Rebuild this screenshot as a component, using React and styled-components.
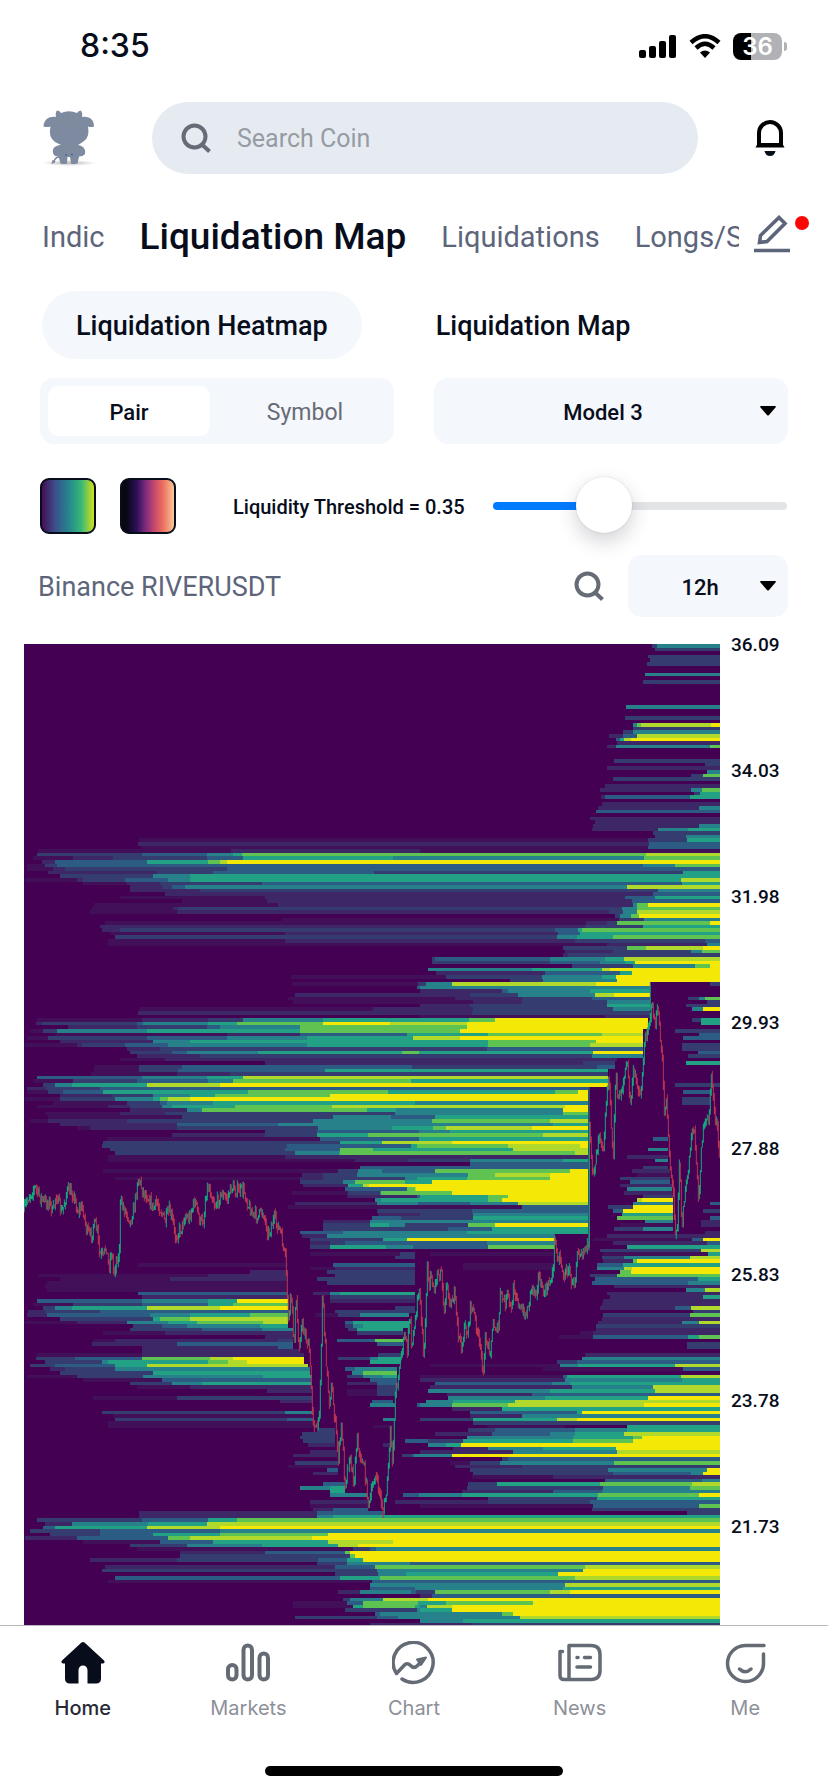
import React, { useState } from "react";
import styled, { createGlobalStyle } from "styled-components";

const Global = createGlobalStyle`
  *, *::before, *::after { box-sizing: border-box; }
  body { margin: 0; background: #fff; color: #070d1b; font-family: Roboto, "Liberation Sans", sans-serif; }
  button, input, select { font: inherit; color: inherit; border: 0; padding: 0; margin: 0; background: none; }
  button { cursor: pointer; }
`;

/* ---------- heatmap data: "row|start:level start:level ..." ---------- */

const LEVELS = ["#440154", "#421059", "#3d2767", "#353d70", "#2c5b83", "#26818a", "#22a184", "#5fc351", "#b0d92c", "#f4e807"];

const NORTH_WEST = `
622|358:1;633|355:2;644|365:1;655|55:1 632:2;666|50:3 150:3 365:4 560:5 640:6 665:7;677|40:1 160:2 280:3 560:4 670:6;
688|65:2 105:4 380:6 565:7 600:8 620:9;699|20:1 75:3 110:4;710|20:1 100:2 135:3 620:4;720|85:2 410:3 580:4;
731|120:3 400:5 510:6;742|15:1 170:2 190:3 315:4 445:5 510:6;753|190:1 320:2 420:3 725:4;764|330:2 425:3 455:4 495:5;
774|330:2 540:3;785|435:2;796|300:1 735:2;807|485:1 740:2;818|222:1 775:2;828|215:1 460:2 475:3;839|210:1 470:2;
860|785:1;871|255:1;882|240:2;893|245:2 300:3;904|270:1 795:2;915|285:3;926|265:1 795:2;936|265:1;1033|813:1;
1054|815:1 1195:3;1065|1190:4;1087|825:2;1098|805:1;1109|820:1;1130|358:1;1141|355:2;1164|50:1 365:2 565:3 670:5 910:6;
1175|48:2 65:3 350:4 370:5 565:6 650:7 910:9;1186|145:2 350:3 560:4 600:5 840:7;1196|30:1 70:3 110:5 380:6 840:7;
1207|105:1 620:2 840:4 1160:6;1218|20:1 85:3 380:4 620:5 860:6 1180:8;1229|120:2 400:5 510:6;
1239|15:1 170:2 185:3 315:4 445:5 860:6;1250|320:2 420:3;1261|330:3 455:4 500:5 715:6 1145:7;1272|350:2 540:3;
1283|300:1 435:2;1293|735:2;1304|222:1 357:3 485:4;1315|222:1 358:3 475:4 915:6;1326|212:1 470:2 630:3;
1337|50:4 365:5 560:6 670:8;1347|40:1 160:3 350:4 565:5 640:7;1358|70:3 105:5 155:6 380:8 600:9;1369|20:2 78:3 240:4;
1380|20:1 85:3 130:4 250:6 685:7;1391|120:2 275:3 400:5 510:6 585:7 930:9;1401|15:1 120:3 285:5 400:6 420:7 445:8 510:9;
1412|100:1 320:3 420:4 440:5 580:6;1423|50:1 265:2 330:3 425:5 455:6 645:7 935:8;1434|330:2 500:5 545:7;
1445|75:1 300:2 435:3 1125:5;1455|85:1 485:3 940:5;1466|30:1 85:2 320:3 880:5;1477|120:2 470:4 775:5;1488|170:1 210:2 470:3 895:5`;

const NORTH_EAST = `
42|695:3 712:5;53|705:3;75|685:3;86|690:3;97|682:3;129|675:5;150|670:3;225|618:5;257|615:3;279|638:5 650:7 664:8 872:9;
290|640:3;301|608:3 640:5;312|567:2 610:4 650:8;323|587:4 600:6 612:8 633:9;333|592:2;344|562:2 588:5 870:7;387|582:3;
398|855:3;408|560:2;420|860:5;430|813:3 848:7;440|580:3;462|555:2;473|540:2 812:5 845:7;484|822:3 840:6;
494|543:2 555:4 810:6;516|546:2;527|535:2 838:5;538|528:4;559|510:2;570|524:2;581|520:2 836:5;592|516:2 714:5 804:6;
602|700:3;613|705:3 798:5;624|0:1 685:3 800:6;634|0:2 688:4;645|0:1 683:4;656|0:1;667|0:7 678:8;678|0:5 672:7;688|0:9;
699|0:4 670:5 765:7;710|0:4;721|0:3 788:6;732|0:6;743|0:6 783:8;753|0:4 786:6;764|0:5 620:8;775|0:3 713:5;786|0:2 700:4;
797|0:2 615:4 705:6;807|0:2 637:4;818|0:2 638:5 650:7 685:9;829|0:3 606:5 650:7;840|0:2 567:3 610:5 650:8;
850|585:3 600:5 632:7 656:9;861|598:3 672:5;872|0:1 498:2 562:3 590:7 870:9;883|0:2 495:3 670:6;893|0:3 405:4 475:6 487:7;
904|0:2 415:4 480:6;915|0:3 410:5 470:6 580:7;926|0:2 465:3 855:4;937|0:1 560:2 860:5;948|430:3 620:7 678:8 850:9;
958|435:2 580:3 813:5 845:7;969|430:2 445:3;980|35:3 45:4 390:5 555:6 612:8;991|35:3 390:4 540:5 615:6 645:9;
1001|455:3 640:5 825:7 870:9;1012|25:5 335:6 545:8 570:9;1023|48:2 375:4 600:6 635:9;1034|78:3 365:5 545:6 587:9;
1045|270:3 370:5 590:9;1056|0:3 18:5 97:8 527:9 690:0 870:3;1067|0:5 690:0;1078|0:2 245:4 265:5 510:6 690:0;
1088|150:3 295:5 525:8 582:9 690:0;1099|105:2 305:3 515:4 690:0 805:3 836:5 855:7;1110|160:2 305:3 560:5 690:0 862:3;
1121|0:2 150:3 560:6 690:0 798:3;1132|0:2 160:3 580:5 690:0 815:5 850:9;1142|155:3 690:0;1153|0:1 555:2 690:0;
1164|0:6 147:7 225:9 683:0 815:3 843:6;1175|0:8 140:9 683:0 843:6;1186|0:7 140:9 683:0;1196|0:7 120:9 668:0 765:3;
1207|0:6 205:7 545:8 668:0 838:4;1218|0:8 120:9 668:0 788:4;1229|0:6 205:7 527:9 668:0;1239|0:6 205:7 510:8 668:0 785:3;
1250|0:3 200:4 668:0 785:3;1261|0:6 520:9 668:0 835:4;1272|0:3 515:5 668:0 805:3;1283|0:2 590:0;1294|0:2 490:3 586:0 798:6;
1304|0:3 530:4 586:0;1315|0:6 565:0;1326|0:3 565:0;1337|0:8 565:0;1347|0:6 565:0;1358|0:9 565:0 765:3;1369|0:4 505:0;
1380|0:6 405:7 475:9 505:0 788:4 870:0;1391|0:9 505:0;1401|0:9 505:0 785:3 870:0;1412|0:5 505:0 785:3 870:0;
1423|0:8 435:9 505:0;1434|0:5 430:9 505:0;1445|0:5 430:7 505:0;1455|0:4 45:6 505:0;1466|0:5 35:7 390:8 505:0;
1477|0:5 400:6 505:0;1488|0:6 40:7 78:8 335:9 505:0`;

const SOUTH_WEST = `
-2|735:3 890:4;9|455:2 735:3 890:6;20|260:1 900:4;30|250:3 900:3;41|245:3 800:4;52|270:3 795:4 960:7;63|285:3 825:5;73|265:1 795:2;
84|265:1;106|1020:4;117|250:1 955:3 1015:5;127|845:2 910:3 1010:5;138|285:1 840:2 910:3;149|840:3 970:5 1005:7;
160|850:2 985:6 1030:8;171|975:4 1160:7;181|815:1 985:3;192|980:2 1190:4;203|1065:5;214|825:2 1070:5;225|805:1;
235|1070:3;246|1075:2;257|1055:4;268|910:2 1050:5;278|910:3 1050:6;289|910:3;300|840:4;311|845:2 920:5;
322|870:3 1090:6 1160:9;333|870:2 930:3;343|870:3 930:6;365|870:1 1140:3;376|1125:3;397|355:1 805:0 940:4;
408|870:1 945:2;419|690:2 805:0 920:3;430|55:1 565:2 805:0 945:3;440|120:1 450:2 805:0 890:3;451|80:1 805:0 920:3;
462|75:1 805:0;473|80:1 805:0;484|355:4 805:0 880:2 930:5 960:6;494|365:2 805:0 930:3;505|50:4 365:5 565:6 650:9 805:0 930:2;
516|40:1 160:3 365:4 565:6 640:7 805:0;527|70:3 105:5 155:6 380:8 600:9 805:0 1125:3;538|25:2 75:3 240:4 805:0 945:3;
548|20:2 80:4 390:5 510:6 690:7 805:0 885:1 955:3 1020:5 1168:0;559|120:3 400:6 420:7 510:8 805:0;570|15:1 170:2 320:5 445:6 530:7 730:8 805:0 975:4 1000:6 1168:0;
581|340:3 425:4 500:5 720:6 805:0 975:3 1000:5 1030:6 1168:0;592|330:3 545:4 725:5 820:0 985:3 1010:6 1150:0;602|250:1 435:2 820:0 1010:3 1150:0;
613|735:2 820:0;624|220:1 285:2 775:3 820:0 950:4 1065:7 1150:0;635|215:2 470:4 820:0 1070:4 1150:0;645|365:2 775:4 820:0;
656|365:2 840:0;667|50:1 365:2 853:0 1075:3 1145:0;678|48:3 165:4 365:7 570:8 640:9 853:0 955:3 1050:5 1075:6 1142:0;
689|75:3 245:5 265:6 565:7 625:8 680:9 853:0 1050:6 1142:0;699|30:3 105:4 285:6 380:8 865:0;710|90:2 135:3 285:5 870:0 975:4 1005:5 1130:0;
721|120:3 400:6 870:0 995:5 1030:7 1130:0;732|20:1 170:3 370:5 730:6 875:0 980:3 1030:5 1090:6 1130:0;743|190:1 425:4 875:0 1050:4 1130:0;
753|330:3 455:5 545:6 875:0 980:2 1070:4 1130:0;764|350:1 510:2 875:0 1070:3 1130:0;775|740:2 875:0 980:1 1070:3 1130:0;786|980:1 1070:3 1130:0;797|220:1 470:3 875:0;
807|780:2 875:0 1055:4 1120:0;818|1050:5 1125:0 1190:4;840|245:3 795:5 875:0;850|280:1 875:0;861|285:3 800:4 880:0 1090:5 1125:0;
872|265:1 880:0;883|265:1 880:0 1060:1 1120:0;894|890:3 945:0;904|845:3 945:0;915|840:3 945:0;926|850:3 945:0 1155:4;
937|865:2 945:0 1090:2 1120:0;958|870:2 950:0;969|820:2 950:0 1145:3;991|825:3 955:0;1001|805:1 955:0;1012|920:4 955:0;
1023|880:2 955:0;1055|910:4 975:0;1066|840:5 930:6 975:0;1077|930:6 975:0;1088|930:5 1045:0 1150:4;1109|870:2 1045:0 1125:2;
1120|870:1 1045:0;1131|880:2 940:4 1045:0;1142|358:2 890:4 1090:0;1152|358:2 890:5 940:6;1164|50:3 365:4 565:6 650:7;1174|75:2 155:5 385:6 560:8;
1185|70:4 105:6 380:8 600:9;1196|30:3 240:4 600:5;1207|90:3 240:4 400:6 600:7 925:9;1218|15:2 170:4 445:7 510:8 875:9;
1229|190:1 420:4 580:6 925:8 1120:9;1239|330:3 500:5 725:6 955:8 1015:9;1250|350:1 1000:3;1261|480:2 735:4 975:7 990:9;
1272|480:3 990:7 1005:9;1283|210:2 470:3 895:4 980:6 1030:9;1293|890:3 980:5;1304|255:2 945:4 1065:7;1315|245:3 1070:5;
1326|945:3 1075:5;1337|285:4 960:6 1080:7;1347|265:1 1055:4;1358|1050:5;1369|1050:4;1380|955:2 1020:5;1401|970:3 990:5 1090:8;
1412|820:1 980:4 1030:7;1423|820:1 1000:6 1030:7;1434|975:3 1190:5;1444|1065:4;1455|825:3 1070:4;1477|1050:2`;

const SOUTH_EAST = `
-2|0:5 90:6 505:0;9|0:7 370:8 505:0;20|0:6 505:0 700:4 745:0;30|0:8 95:9 505:0;41|0:7 265:8 480:9 505:0;52|0:6 280:8 505:0 685:5 745:0;
63|0:7 465:8 505:0;73|0:2 505:0 620:2 745:0;84|0:3 150:5 430:6 505:0 705:5 745:0;95|0:0 150:4 505:0;106|0:4 505:0 670:3 745:0;117|0:4 45:7 450:9 505:0 635:2 750:0;
127|0:5 145:7 225:8 390:9 505:0 650:1 750:0;138|0:6 140:7 390:9 505:0 600:3 750:0;149|0:6 35:9 505:0 630:4 750:0;160|0:9 505:0 600:2 755:0;171|0:9 505:0 620:5 755:0;
182|0:7 95:9 505:0 612:2 755:0;192|0:6 205:7 265:9 505:0 670:3 760:0;203|0:6 205:7 245:9 505:0 650:8 665:9 760:0;214|0:4 150:5 295:8 505:0 640:5 760:0 870:4;
225|0:1 305:4 505:0 565:3 640:9 760:0;235|0:3 155:4 505:0 580:4 610:9 760:0 850:3;246|0:3 160:5 505:0 605:6 760:0;257|0:3 160:6 505:0 590:7 760:0 870:4;
268|0:5 505:0 675:5 760:0 842:2;278|0:3 145:7 225:9 505:0 600:1 760:0 842:2;289|0:3 85:4 215:6 505:0 582:3 670:5 760:0;300|0:5 140:6 505:0 855:2;
311|0:5 405:0 560:2;322|0:9 405:0 520:1 815:4 850:9;333|0:4 200:5 405:0 580:2 860:4;343|0:4 205:7 405:0 620:6;354|540:3 843:8;
365|30:1 400:0 550:1 865:6;376|545:3 612:5 810:8;387|550:2 640:7 650:9;397|130:1 400:0 530:4 610:6;408|130:1 400:0 530:5 612:8 635:9;419|600:7 632:9;
430|510:3 590:7;440|525:4 835:6;451|515:4 805:5;462|582:2;473|798:5 855:8;484|560:2;494|570:2 850:6;505|550:2;516|545:2;
527|540:2 765:4 812:8;538|820:3;548|550:3 810:7;559|545:2;570|535:2 785:5 836:8;581|528:3;592|528:2;602|480:1 520:2;
613|418:1 520:4 805:6 838:7;635|800:3;645|800:3;667|495:2;678|485:5;689|410:3 470:4;699|30:1 420:5 475:6 765:8;710|370:1 788:4;
732|0:1 430:4 440:6 783:8;743|0:2 435:5 785:6;753|45:4 395:5 450:6;764|30:2 455:5 700:8;775|25:5 390:6 705:8;786|80:2 335:4;
797|85:5 375:6 685:9;807|18:5 100:6 285:8;818|0:5 97:7 265:8 672:9;829|97:2 245:6;840|150:4 470:6 485:9;850|150:2 305:5;
861|0:3 160:6 410:8 470:9;872|160:3;883|200:1 435:0 620:6;894|145:3 225:4 465:5 620:6;904|45:2 215:4 390:5 465:6 612:8;915|140:5 460:6 640:7 665:9;
926|25:3 130:6 460:7 640:9;937|25:5 78:6 122:9;947|100:2 205:5 370:6 587:9;958|0:2 280:5 590:8;969|0:5 97:9;980|245:3 265:4;
991|90:1 150:3 240:5 582:7;1001|105:2 305:3;1012|150:3 565:5 860:9;1023|160:3 580:4 812:5 850:9;1034|155:1 400:2;1045|555:4 845:5;
1055|145:3 230:6 540:7 815:8;1066|140:3 550:5 810:7;1077|125:2 400:4 545:5;1088|0:5 125:6 535:7 838:9;1099|205:3 530:6;
1109|205:3 510:4;1120|0:1 520:4 838:7;1131|515:3 805:3;1142|0:0 800:3;1152|0:6;1164|0:7;1174|0:8;1185|0:9;1196|0:5;1207|0:9;
1218|0:9;1229|0:9;1239|0:9;1250|0:5;1261|0:9;1272|0:9;1283|0:9;1293|0:4;1304|0:7 495:8;1315|0:5 490:9;1326|0:6 415:9;
1337|0:7 465:8;1347|0:4;1358|0:5 435:8;1369|0:5 430:6;1380|0:3 45:7 390:8 450:9;1391|0:2 35:4;1401|0:8 25:9;1412|0:6 78:7 340:9;
1423|0:5 20:8 95:9;1434|0:6 95:9;1444|0:5 245:7 280:9;1455|0:5 300:8;1466|0:5 130:6;1477|0:2 160:3`;

const ROW = 10.785;
const TOP = 42;
const MIDDLE = 1200;
const RIGHT = 2100;

function makeRandom(start) {
  let seed = start;
  return () => {
    seed = (seed * 16807) % 2147483647;
    return seed / 2147483647;
  };
}

function readBlock(rows, side, text, dx, dy) {
  text.replace(/\s*\n/g, "").split(";").forEach((line) => {
    const [row, cells] = line.split("|");
    const k = Math.round((Number(row) + dy - TOP) / ROW);
    rows[k] = rows[k] || { west: [], east: [] };
    rows[k][side] = cells.trim().split(" ").map((c) => {
      const [x, level] = c.split(":").map(Number);
      return [x + dx, level];
    });
  });
}

/* Joins the west and east half of each row; where the levels differ, the step is spread over a short stretch. */
function buildBands() {
  const rows = {};
  readBlock(rows, "west", NORTH_WEST, 0, 0);
  readBlock(rows, "east", NORTH_EAST, MIDDLE, 0);
  readBlock(rows, "west", SOUTH_WEST, 0, 1500);
  readBlock(rows, "east", SOUTH_EAST, MIDDLE, 1500);
  const rand = makeRandom(11);
  const paths = LEVELS.map(() => "");
  Object.keys(rows).forEach((key) => {
    const k = Number(key);
    const { west, east } = rows[k];
    const y1 = TOP + k * ROW;
    const y2 = (y1 + ROW).toFixed(1);
    const underPrice = y1 > 1840 && y1 < 2390;
    const stops = [...west];
    const lastWest = west.length ? west[west.length - 1] : [0, 0];
    if (east.length && east[0][0] === MIDDLE) {
      const diff = Math.abs(east[0][1] - lastWest[1]);
      const room = MIDDLE - Math.max(lastWest[0], 900);
      if (diff > 0 && lastWest[1] > 0 && room > 20) {
        const a = MIDDLE - room * rand() * 0.9;
        stops.push([Math.round(a), Math.round((east[0][1] + lastWest[1]) / 2)]);
        stops.push([Math.round(a + (MIDDLE - a) * rand()), east[0][1]]);
      }
    } else if (underPrice) {
      stops.push([MIDDLE - 14, 0]);
    }
    stops.push(...east);
    stops.forEach(([x, level], i) => {
      const right = i + 1 < stops.length ? stops[i + 1][0] : RIGHT;
      if (level) paths[level] += `M${x} ${y1.toFixed(1)}H${right}V${y2}H${x}Z`;
    });
  });
  return paths;
}

const PRICE = `12,1740 25,1700 45,1670 60,1700 75,1715 90,1715 98,1750 108,1690 125,1750 142,1680 160,1690 172,1740 188,1730 200,1800
212,1820 222,1780 232,1800 238,1870 250,1880 258,1840 266,1910 275,1860 281,1930 290,1880 297,1890 301,1720 310,1730 322,1750
332,1775 345,1715 354,1640 370,1685 385,1700 400,1735 410,1715 425,1745 435,1775 447,1740 458,1770 465,1820 485,1790 495,1755
505,1765 525,1710 540,1775 552,1765 558,1680 568,1670 585,1725 605,1690 620,1705 635,1670 650,1680 672,1680 685,1725 700,1755
715,1755 728,1740 745,1810 763,1765 780,1800 797,1890 806,2080 813,1980 822,2140 828,2000 836,2150 846,2080 858,2120 868,2160
878,2350 887,2400 897,2370 903,2180 908,1960 912,2080 922,2240 928,2310 935,2270 945,2370 955,2480 965,2380 975,2560 988,2480
1002,2550 1012,2410 1020,2490 1030,2490 1040,2570 1047,2630 1055,2580 1065,2530 1080,2590 1090,2645 1100,2580 1112,2400
1118,2500 1125,2300 1135,2230 1145,2160 1155,2110 1162,2160 1170,2040 1175,2150 1185,2080 1192,1990 1200,1990 1205,2080
1211,2185 1217,2050 1223,1870 1226,1980 1232,1930 1243,1980 1250,1930 1265,1920 1272,2040 1280,1965 1293,2020 1303,1990
1315,2110 1325,2150 1335,2090 1343,2110 1352,2020 1365,2060 1378,2140 1391,2220 1397,2120 1410,2160 1420,2080 1435,2100
1441,1990 1455,2020 1463,1990 1475,2050 1479,1970 1490,1990 1500,2040 1520,2050 1535,1965 1548,1985 1556,1930 1568,1990
1582,1975 1600,1920 1603,1815 1610,1870 1620,1880 1632,1940 1645,1910 1657,1965 1666,1940 1672,1850 1685,1865 1700,1840
1706,1860 1708,1500 1715,1600 1722,1620 1738,1500 1750,1550 1765,1330 1772,1450 1779,1590 1788,1310 1790,1400 1805,1380
1821,1295 1832,1430 1838,1330 1850,1350 1862,1400 1872,1260 1880,1200 1892,1150 1896,1125 1905,1180 1915,1140 1922,1250
1928,1310 1934,1470 1940,1380 1944,1500 1950,1600 1960,1690 1965,1800 1972,1780 1979,1560 1985,1800 1995,1680 2005,1620
2018,1480 2025,1510 2035,1720 2045,1530 2055,1480 2065,1470 2075,1330 2083,1440 2092,1500 2100,1610`;

function buildCandles() {
  const pts = PRICE.split(/\s+/).map((p) => p.split(",").map(Number));
  const rand = makeRandom(7);
  let up = "";
  let down = "";
  let last = pts[0][1];
  let s = 0;
  for (let x = 13; x < RIGHT; x += 3) {
    while (pts[s + 1][0] < x) s += 1;
    const [x0, y0] = pts[s];
    const [x1, y1] = pts[s + 1];
    const next = y0 + ((y1 - y0) * (x - x0)) / (x1 - x0) + (rand() - 0.5) * 34;
    const hi = Math.min(last, next) - rand() * 16;
    const lo = Math.max(last, next) + rand() * 16;
    const bar = `M${x} ${hi.toFixed(0)}V${lo.toFixed(0)}`;
    if (next < last) up += bar;
    else down += bar;
    last = next;
  }
  return { up, down };
}

const BANDS = buildBands();
const CANDLES = buildCandles();

/* ---------- layout ---------- */

const Page = styled.div`
  min-height: 100vh;
  display: flex;
  flex-direction: column;
  overflow: hidden;
`;

const StatusBar = styled.div`
  height: 92px;
  padding: 0 41px 0 80px;
  display: flex;
  align-items: center;
  justify-content: space-between;
  font-family: Inter, sans-serif;
`;

const Clock = styled.time`
  font-size: 32px;
  font-weight: 500;
  line-height: 40px;
`;

const StatusIcons = styled.div`
  display: flex;
  align-items: center;
  gap: 12px;
`;

const Battery = styled.span`
  display: flex;
  align-items: center;
  gap: 2px;
`;

const BatteryBody = styled.span`
  width: 49px;
  height: 27px;
  border-radius: 8px;
  background: linear-gradient(90deg, #000 36%, #b1b2b6 36%);
  color: #fff;
  font-size: 24px;
  font-weight: 600;
  line-height: 27px;
  text-align: center;
`;

const BatteryTip = styled.span`
  width: 3px;
  height: 9px;
  border-radius: 0 3px 3px 0;
  background: #b1b2b6;
`;

const Header = styled.header`
  display: flex;
  align-items: center;
  padding: 10px 42px 0 40px;
`;

const Avatar = styled.a`
  width: 112px;
  height: 60px;
  display: block;
`;

const SearchBox = styled.label`
  flex: 1;
  height: 72px;
  border-radius: 36px;
  background: #e6ebf2;
  display: flex;
  align-items: center;
  gap: 26px;
  padding: 0 29px;
`;

const SearchInput = styled.input`
  flex: 1;
  min-width: 0;
  padding-top: 2px;
  font-size: 25px;
  line-height: 32px;
  outline: none;
  &::placeholder { color: #979ba3; opacity: 1; }
`;

const IconButton = styled.button`
  display: flex;
`;

const BellButton = styled(IconButton)`
  margin-left: 56px;
`;

const TabsRow = styled.div`
  display: flex;
  align-items: center;
  padding: 0 19px 0 42px;
  height: 126px;
`;

const Tabs = styled.nav`
  flex: 1;
  min-width: 0;
  overflow: hidden;
  display: flex;
  align-items: center;
  gap: 35px;
  height: 48px;
`;

const Tab = styled.a`
  flex: none;
  white-space: nowrap;
  text-decoration: none;
  line-height: 48px;
  font-size: ${(p) => (p.$active ? 37 : 29)}px;
  font-weight: ${(p) => (p.$active ? 500 : 400)};
  color: ${(p) => (p.$active ? "#070d1b" : "#5d657b")};
`;

const EditButton = styled.button`
  position: relative;
  width: 56px;
  height: 48px;
  margin-left: 14px;
  text-align: left;
`;

const Dot = styled.span`
  position: absolute;
  top: 3px;
  right: 0;
  width: 14px;
  height: 14px;
  border-radius: 50%;
  background: #fb0505;
`;

const PillRow = styled.div`
  display: flex;
  gap: 40px;
  padding: 0 42px;
  margin-top: -9px;
`;

const Pill = styled.button`
  height: 68px;
  padding: 2px 34px 0;
  border-radius: 34px;
  background: ${(p) => (p.$active ? "#f4f7fb" : "transparent")};
  font-size: 27px;
  font-weight: 500;
  white-space: nowrap;
`;

const Controls = styled.div`
  display: grid;
  grid-template-columns: 1fr 1fr;
  gap: 40px;
  padding: 0 40px;
  margin-top: 19px;
`;

const Segmented = styled.div`
  height: 66px;
  padding: 8px;
  border-radius: 14px;
  background: #f4f7fb;
  display: grid;
  grid-template-columns: 1fr 1fr;
  gap: 14px;
`;

const Segment = styled.button`
  padding-top: 2px;
  border-radius: 10px;
  font-size: ${(p) => (p.$active ? 22 : 23)}px;
  font-weight: ${(p) => (p.$active ? 500 : 400)};
  color: ${(p) => (p.$active ? "#070d1b" : "#666b75")};
  background: ${(p) => (p.$active ? "#fff" : "transparent")};
`;

const SelectBox = styled.label`
  display: grid;
  align-items: center;
  height: ${(p) => p.$height}px;
  width: ${(p) => p.$width};
  border-radius: 14px;
  background: #f4f7fb;
  & > * { grid-area: 1 / 1; }
  & > svg { justify-self: end; margin-right: 12px; pointer-events: none; }
`;

const Select = styled.select`
  appearance: none;
  width: 100%;
  height: 100%;
  padding: 2px 16px 0 0;
  font-size: 22px;
  font-weight: 500;
  text-align: center;
  text-align-last: center;
  outline: none;
`;

const ThresholdRow = styled.div`
  display: flex;
  align-items: center;
  padding: 0 41px 0 40px;
  margin-top: 34px;
  height: 56px;
`;

const Swatches = styled.div`
  display: flex;
  gap: 24px;
`;

const Swatch = styled.button`
  width: 56px;
  height: 56px;
  border: 2px solid #070d1b;
  border-radius: 9px;
  background: linear-gradient(90deg, ${(p) => p.$stops});
`;

const ThresholdLabel = styled.label`
  margin-left: 57px;
  width: 260px;
  padding-top: 2px;
  font-size: 20px;
  font-weight: 500;
  white-space: nowrap;
`;

const Slider = styled.input`
  appearance: none;
  flex: 1;
  min-width: 0;
  height: 56px;
  outline: none;
  &::-webkit-slider-runnable-track {
    height: 8px;
    border-radius: 4px;
    background: linear-gradient(90deg, #047bff 38%, #e3e4e6 38%);
  }
  &::-webkit-slider-thumb {
    appearance: none;
    width: 56px;
    height: 56px;
    margin-top: -25px;
    border-radius: 50%;
    background: #fff;
    box-shadow: 0 8px 20px rgba(30, 32, 50, 0.2), 0 0 2px rgba(30, 32, 50, 0.15);
  }
`;

const PairRow = styled.div`
  display: flex;
  align-items: center;
  padding: 0 40px 0 38px;
  margin-top: 21px;
`;

const PairName = styled.h1`
  flex: 1;
  margin: 0;
  padding-top: 2px;
  font-size: 27px;
  font-weight: 400;
  color: #5d657b;
`;

const PairSearch = styled(IconButton)`
  margin-right: 24px;
`;

const ChartArea = styled.main`
  flex: 1;
  display: grid;
  grid-template-columns: 1fr 97px;
  column-gap: 11px;
  margin-top: 27px;
  padding-left: 24px;
`;

const Heatmap = styled.svg`
  display: block;
  width: 100%;
  height: 100%;
  min-height: 980px;
  background: #440154;
`;

const Axis = styled.div`
  display: flex;
  flex-direction: column;
  gap: 102px;
  margin-top: -11px;
  font-size: 19px;
  font-weight: 500;
`;

const Tick = styled.span`
  line-height: 24px;
`;

const BottomNav = styled.nav`
  height: 167px;
  border-top: 1px solid #b9b9be;
  background: #fff;
  display: flex;
  flex-direction: column;
  align-items: center;
  justify-content: space-between;
  padding-bottom: 16px;
`;

const NavItems = styled.div`
  width: 100%;
  display: grid;
  grid-template-columns: repeat(5, 1fr);
`;

const NavItem = styled.a`
  display: flex;
  flex-direction: column;
  align-items: center;
  padding-top: 15px;
  text-decoration: none;
  font-family: Inter, sans-serif;
  font-size: 20px;
  font-weight: ${(p) => (p.$active ? 500 : 400)};
  line-height: 30px;
  gap: 8px;
  color: ${(p) => (p.$active ? "#262a35" : "#8d9098")};
`;

const HomeBar = styled.div`
  width: 36%;
  height: 10px;
  border-radius: 5px;
  background: #000;
`;

/* ---------- icons ---------- */

const Magnifier = () => (
  <svg width="30" height="30" viewBox="0 0 30 30" fill="none" stroke="#666c75" strokeWidth="4" aria-hidden="true">
    <circle cx="13.500" cy="13.500" r="11" />
    <path d="M21 21.500l7.500 7" />
  </svg>
);

const Caret = () => (
  <svg width="16" height="10" viewBox="0 0 16 10" aria-hidden="true">
    <path d="M1 0h14q1.500 .4 .5 1.600L9 9q-1 1-2 0L.5 1.600Q-.5.4 1 0z" fill="#000" />
  </svg>
);

const Bull = () => (
  <svg width="60" height="60" viewBox="0 0 60 60" aria-hidden="true">
    <defs>
      <radialGradient id="bullShadow">
        <stop offset="0" stopColor="#999" stopOpacity="0.7" />
        <stop offset="1" stopColor="#999" stopOpacity="0" />
      </radialGradient>
    </defs>
    <ellipse cx="29" cy="55" rx="27" ry="3" fill="url(#bullShadow)" />
    <g fill="#7d8a9f">
      <path d="M16 9Q15 5 17 2.500Q20 2.500 21 5Q29 1.500 37 5Q38.500 2.500 41 2.500Q43 6 42 9C50 8 54 12 54 18.500Q51 19.500 48 18.500Q50 29 44 33Q40 36 38 37C44 38 46 42 45 46Q43 48.500 39 48.500L37.500 55.500Q32 56.500 31 55.500L30 49H27.500L27 55.500Q26 56.500 20.500 55.500L18.500 48.500Q14 48.500 13 45C12 40 15 37.500 21 37Q19 36 15 34Q8 29 10.500 18.500Q7 19.500 3.500 18.500C4 12 8 8 16 9z" />
    </g>
    <path d="M19 49q-3 0-5 4" fill="none" stroke="#7d8a9f" strokeWidth="1.500" />
    <path d="M12.500 52l3 1-1 2-3 1z" fill="#7d8a9f" />
    <g fill="#8c9a92">
      <circle cx="20" cy="11" r=".7" /><circle cx="25" cy="8" r=".7" /><circle cx="31" cy="7" r=".7" />
      <circle cx="37" cy="9" r=".7" /><circle cx="23" cy="14" r=".7" /><circle cx="30" cy="13" r=".7" />
      <circle cx="35" cy="15" r=".7" /><circle cx="27" cy="17" r=".7" /><circle cx="18" cy="16" r=".7" />
    </g>
    <circle cx="26" cy="47" r=".8" fill="#195a9c" /><circle cx="32" cy="46.500" r=".8" fill="#195a9c" />
  </svg>
);

const Bell = () => (
  <svg width="32" height="40" viewBox="0 0 32 40" aria-hidden="true">
    <path d="M5 27V15a11 11 0 0 1 22 0v12" fill="none" stroke="#000" strokeWidth="4" />
    <path d="M1.500 29.500L4 25h24l2.500 4.500z" fill="#000" />
    <path d="M10.500 33h11q-1 5-5.500 5t-5.500-5z" fill="#070d1b" />
  </svg>
);

const Pencil = () => (
  <svg width="38" height="40" viewBox="0 0 38 40" fill="none" stroke="#5d657b" aria-hidden="true">
    <path d="M6.500 27.500L7.500 20.500L26 2.500L32 8.500L14 26.500Z" strokeWidth="3.600" />
    <path d="M1 35.500H37" strokeWidth="3.600" />
  </svg>
);

const Signal = () => (
  <svg width="38" height="25" viewBox="0 0 38 25" aria-hidden="true">
    <rect x="0" y="16" width="7" height="8" rx="2" />
    <rect x="10" y="12" width="7" height="12" rx="2" />
    <rect x="20" y="7" width="7" height="17" rx="2" />
    <rect x="30" y="1" width="7" height="23" rx="2" />
  </svg>
);

const Wifi = () => (
  <svg width="32" height="24" viewBox="0 0 32 24" aria-hidden="true">
    <path d="M2 8.500Q16-4 30 8.500" fill="none" stroke="#000" strokeWidth="4.500" />
    <path d="M7 14Q16 5.500 25 14" fill="none" stroke="#000" strokeWidth="4.500" />
    <path d="M11 18.500Q16 14.500 21 18.500L16 24z" />
  </svg>
);

const HomeIcon = () => (
  <svg width="44" height="44" viewBox="0 0 44 44" fill="#070d1b" aria-hidden="true">
    <path d="M20.500 1.500Q22 .3 23.500 1.500L43 19.500Q44.500 22 42 22.500H40V37.500Q40 42.500 35 42.500H26.500V29Q26 24.500 22 24.500T17.500 29V42.500H9Q4 42.500 4 37.500V22.500H2Q-.5 22 1 19.500z" />
  </svg>
);

const MarketsIcon = () => (
  <svg width="44" height="44" viewBox="0 0 44 44" fill="none" stroke="#646b74" strokeWidth="4" aria-hidden="true">
    <rect x="2" y="24" width="8.500" height="14.500" rx="4.250" />
    <rect x="17.500" y="4.500" width="8.500" height="34" rx="4.250" />
    <rect x="33.500" y="12.500" width="8.500" height="26" rx="4.250" />
  </svg>
);

const ChartIcon = () => (
  <svg width="44" height="44" viewBox="0 0 44 44" fill="none" stroke="#646b74" strokeWidth="3.500" strokeLinecap="round" strokeLinejoin="round" aria-hidden="true">
    <path d="M10 38A20 20 0 1 0 4.500 32.500L12 24.500Q15 21 18.500 24.500Q22 28 25 25L30 20" />
    <path d="M25 18.500L34 16.500L29 24z" fill="#646b74" strokeWidth="2" />
  </svg>
);

const NewsIcon = () => (
  <svg width="44" height="44" viewBox="0 0 44 44" fill="none" stroke="#646b74" strokeWidth="3.500" strokeLinecap="round" strokeLinejoin="round" aria-hidden="true">
    <path d="M11 4.500H33Q42 4.500 42 13.500V29.500Q42 38.500 33 38.500H6Q2 38.500 2 34.500V10.500H4.500M11 4.500V38.500" />
    <path d="M19 16.500h1M26.500 16.500h6M19 26h13.500" />
  </svg>
);

const MeIcon = () => (
  <svg width="44" height="44" viewBox="0 0 44 44" fill="none" stroke="#646b74" strokeWidth="3.500" strokeLinecap="round" aria-hidden="true">
    <path d="M41 4.500H22A18 18 0 1 0 40.500 22V13" />
    <path d="M16.500 28Q22 33.500 28 28" />
  </svg>
);

const NAV = [
  ["Home", HomeIcon],
  ["Markets", MarketsIcon],
  ["Chart", ChartIcon],
  ["News", NewsIcon],
  ["Me", MeIcon],
];

const VIRIDIS = "#440d54, #3b4f8a 25%, #25838e 50%, #35b779 75%, #d2e21b";
const MAGMA = "#070812 8%, #2d0f58 28%, #7b2b7b 45%, #c8496c 63%, #ee7260 80%, #f9c795";

export default function App() {
  const [threshold, setThreshold] = useState(0.35);
  return (
    <Page>
      <Global />
      <StatusBar>
        <Clock>8:35</Clock>
        <StatusIcons>
          <Signal />
          <Wifi />
          <Battery>
            <BatteryBody>36</BatteryBody>
            <BatteryTip />
          </Battery>
        </StatusIcons>
      </StatusBar>

      <Header>
        <Avatar href="#profile" aria-label="Profile"><Bull /></Avatar>
        <SearchBox>
          <Magnifier />
          <SearchInput type="text" placeholder="Search Coin" aria-label="Search Coin" />
        </SearchBox>
        <BellButton aria-label="Notifications"><Bell /></BellButton>
      </Header>

      <TabsRow>
        <Tabs>
          <Tab href="#indic">Indic</Tab>
          <Tab href="#map" $active>Liquidation Map</Tab>
          <Tab href="#liquidations">Liquidations</Tab>
          <Tab href="#longs">Longs/Shorts</Tab>
        </Tabs>
        <EditButton aria-label="Edit tabs"><Pencil /><Dot /></EditButton>
      </TabsRow>

      <PillRow>
        <Pill $active>Liquidation Heatmap</Pill>
        <Pill>Liquidation Map</Pill>
      </PillRow>

      <Controls>
        <Segmented>
          <Segment $active>Pair</Segment>
          <Segment>Symbol</Segment>
        </Segmented>
        <SelectBox $height={66} $width="100%">
          <Select aria-label="Model" defaultValue="Model 3">
            <option>Model 3</option>
          </Select>
          <Caret />
        </SelectBox>
      </Controls>

      <ThresholdRow>
        <Swatches>
          <Swatch $stops={VIRIDIS} aria-label="Viridis colours" />
          <Swatch $stops={MAGMA} aria-label="Magma colours" />
        </Swatches>
        <ThresholdLabel htmlFor="threshold">Liquidity Threshold = {threshold}</ThresholdLabel>
        <Slider
          id="threshold"
          type="range"
          min="0"
          max="1"
          step="0.05"
          value={threshold}
          onChange={(e) => setThreshold(Number(e.target.value))}
        />
      </ThresholdRow>

      <PairRow>
        <PairName>Binance RIVERUSDT</PairName>
        <PairSearch aria-label="Search pair"><Magnifier /></PairSearch>
        <SelectBox $height={62} $width="160px">
          <Select aria-label="Time range" defaultValue="12h">
            <option>12h</option>
          </Select>
          <Caret />
        </SelectBox>
      </PairRow>

      <ChartArea>
        <Heatmap viewBox="12 42 2088 2940" preserveAspectRatio="none" role="img" aria-label="Liquidation heatmap">
          <g shapeRendering="crispEdges">
            {BANDS.map((d, i) => (d ? <path key={LEVELS[i]} d={d} fill={LEVELS[i]} /> : null))}
          </g>
          <g fill="none" strokeWidth="3">
            <path d={CANDLES.up} stroke="#12a77c" />
            <path d={CANDLES.down} stroke="#b93450" />
            <path d="M1891 1056V1140M1707 1370V1860" stroke="#22977a" />
          </g>
        </Heatmap>
        <Axis>
          {["36.09", "34.03", "31.98", "29.93", "27.88", "25.83", "23.78", "21.73"].map((t) => (
            <Tick key={t}>{t}</Tick>
          ))}
        </Axis>
      </ChartArea>

      <BottomNav>
        <NavItems>
          {NAV.map(([name, Icon], i) => (
            <NavItem key={name} href={`#${name}`} $active={i === 0}>
              <Icon />
              {name}
            </NavItem>
          ))}
        </NavItems>
        <HomeBar />
      </BottomNav>
    </Page>
  );
}
